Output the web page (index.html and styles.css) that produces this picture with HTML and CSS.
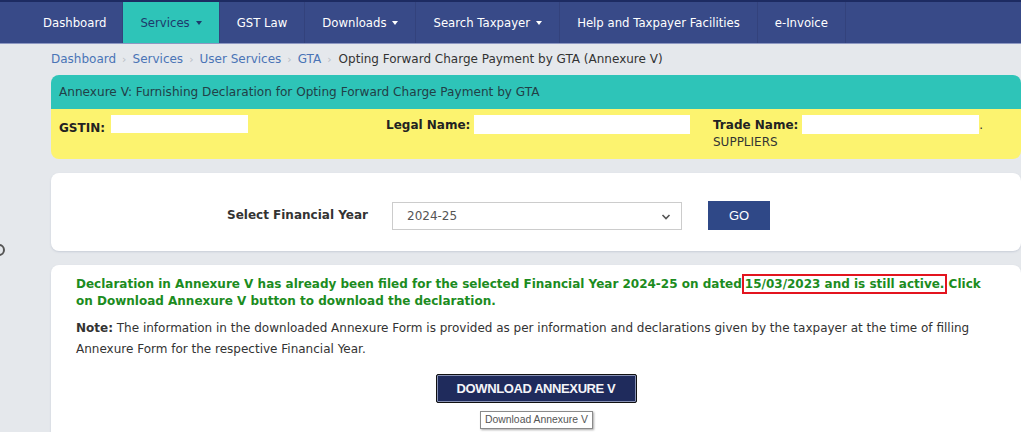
FILE: index.html
```html
<!DOCTYPE html>
<html>
<head>
<meta charset="utf-8">
<link rel="stylesheet" href="styles.css">
</head>
<body>
<nav class="topnav">
  <ul class="menu">
    <li class="item">Dashboard</li>
    <li class="item active">Services <span class="caret"></span></li>
    <li class="item">GST Law</li>
    <li class="item">Downloads <span class="caret"></span></li>
    <li class="item">Search Taxpayer <span class="caret"></span></li>
    <li class="item">Help and Taxpayer Facilities</li>
    <li class="item">e-Invoice</li>
  </ul>
</nav>
<main class="page">
  <span class="edge-ring"></span>
  <div class="crumbs">
    <a>Dashboard</a><span class="sep">›</span>
    <a>Services</a><span class="sep">›</span>
    <a>User Services</a><span class="sep">›</span>
    <a>GTA</a><span class="sep">›</span>
    <span class="current">Opting Forward Charge Payment by GTA (Annexure V)</span>
  </div>
  <section class="panel">
    <div class="panel-title">Annexure V: Furnishing Declaration for Opting Forward Charge Payment by GTA</div>
    <div class="panel-info">
      <div class="col"><b>GSTIN:</b> <span class="mask mask-gstin"></span></div>
      <div class="col"><b>Legal Name:</b> <span class="mask mask-legal"></span></div>
      <div class="col"><b>Trade Name:</b> <span class="mask mask-trade"></span>. SUPPLIERS</div>
    </div>
  </section>
  <section class="card card-select">
    <label class="fy-label">Select Financial Year</label>
    <div class="select">
      <span>2024-25</span>
      <svg class="chev" width="10" height="6" viewBox="0 0 10 6"><path d="M1.5 1 L5 4.5 L8.5 1" fill="none" stroke="#555" stroke-width="1.6"/></svg>
    </div>
    <button class="go">GO</button>
  </section>
  <section class="card card-result">
    <p class="filed">Declaration in Annexure V has already been filed for the selected Financial Year 2024-25 on dated<span class="hl">15/03/2023 and is still active.</span> Click on Download Annexure V button to download the declaration.</p>
    <p class="note"><b>Note:</b> The information in the downloaded Annexure Form is provided as per information and declarations given by the taxpayer at the time of filling Annexure Form for the respective Financial Year.</p>
    <div class="dl-row">
      <button class="dl">DOWNLOAD ANNEXURE V</button>
      <span class="tooltip">Download Annexure V</span>
    </div>
  </section>
</main>
</body>
</html>
```
FILE: styles.css
```css
* { box-sizing: border-box; }
html, body { margin: 0; padding: 0; }
body {
  width: 1021px;
  height: 432px;
  overflow: hidden;
  background: #e5e8ec;
  font-family: "DejaVu Sans", Verdana, sans-serif;
  font-size: 12px;
  color: #333;
}
.topnav {
  height: 44px;
  background: #384a88;
  border-top: 2px solid #1d2b62;
  border-bottom: 1px solid #8d98c2;
}
.menu {
  list-style: none;
  margin: 0;
  padding: 0 0 0 25px;
  display: flex;
  height: 41px;
}
.item {
  color: #fff;
  padding: 0 17px 0 17px;
  display: flex;
  align-items: center;
  gap: 6px;
  border-right: 1px solid #33427c;
  font-size: 11.7px;
}
.item:first-child { padding-left: 18px; padding-right: 16px; }
.item.active {
  background: #2ec4b8;
  color: #1d3a6c;
}
.caret {
  width: 0; height: 0;
  border-left: 3.5px solid transparent;
  border-right: 3.5px solid transparent;
  border-top: 4px solid currentColor;
  margin-top: 1px;
}
.page {
  position: relative;
  padding: 0 0 0 51px;
}
.edge-ring {
  position: absolute;
  left: -7px;
  top: 200px;
  width: 12px;
  height: 12px;
  border: 2px solid #555;
  border-radius: 50%;
}
.crumbs {
  height: 30px;
  display: flex;
  align-items: center;
  font-size: 12px;
  white-space: nowrap;
}
.crumbs a { color: #4a74b6; }
.crumbs .sep { color: #b9bec6; margin: 0 6px 0 6px; font-size: 11px; }
.crumbs .current { color: #333; margin-left: 1px; }
.panel {
  margin-top: 1px;
  border-radius: 8px;
  overflow: hidden;
}
.panel-title {
  background: #2ec4b8;
  color: #214047;
  height: 34px;
  padding: 0 8px;
  display: flex;
  align-items: center;
  font-size: 12.1px;
}
.panel-info {
  background: #fcf36f;
  height: 50px;
  padding: 6px 0 0 8px;
  display: grid;
  grid-template-columns: 327px 327px 281px;
  line-height: 17px;
}
.panel-info b { color: #222; }
.mask {
  display: inline-block;
  background: #fff;
  height: 19px;
  vertical-align: -5px;
}
.mask-gstin { width: 137px; margin-left: 2px; vertical-align: -1px; height: 18px; }
.mask-legal { width: 216px; margin-left: 0; vertical-align: -5px; }
.mask-trade { width: 177px; margin-left: 0; vertical-align: -5px; }
.card {
  background: #fff;
  border-radius: 8px;
  box-shadow: 0 1px 2px rgba(120,130,160,0.25);
}
.card-select {
  margin-top: 14px;
  height: 78px;
  display: flex;
  align-items: center;
  padding: 8px 0 0 176px;
}
.fy-label {
  font-weight: bold;
  font-size: 12px;
  color: #333;
  width: 165px;
  margin-top: -2px;
}
.select {
  width: 290px;
  height: 28px;
  border: 1px solid #ccc;
  display: flex;
  align-items: center;
  justify-content: space-between;
  padding: 0 10px 0 14px;
  color: #555;
  font-size: 12px;
}
.chev { margin-top: 1px; }
.go {
  margin-left: 26px;
  margin-top: -2px;
  width: 62px;
  height: 29px;
  border: 0;
  background: #2f4887;
  color: #fff;
  font-family: "Liberation Sans", Arial, sans-serif;
  font-size: 13px;
}
.card-result {
  margin-top: 14px;
  height: 200px;
  padding: 11px 25px 0 25px;
}
.filed {
  margin: 0;
  color: #1c8c1e;
  font-weight: bold;
  font-size: 12px;
  line-height: 17px;
}
.hl {
  outline: 2px solid #e3141f;
  outline-offset: 1px;
  margin-left: 3px;
}
.note {
  margin: 8px 0 0;
  line-height: 21px;
  font-size: 12px;
  color: #333;
}
.note b { color: #333; }
.dl-row {
  position: relative;
  display: flex;
  justify-content: center;
  margin-top: 14px;
}
.dl {
  width: 201px;
  height: 29px;
  background: #1f2b5c;
  color: #f4f4f8;
  border: 1px solid #111;
  box-shadow: inset 0 0 0 1px #8892b5;
  font-family: "Liberation Sans", Arial, sans-serif;
  font-size: 13px;
  font-weight: bold;
  letter-spacing: -0.4px;
  border-radius: 2px;
}
.tooltip {
  position: absolute;
  left: 404px;
  top: 37px;
  height: 18px;
  padding: 0 4px;
  background: #fff;
  border: 1px solid #8a8a8a;
  box-shadow: 1px 1px 2px rgba(0,0,0,0.35);
  font-family: "Liberation Sans", Arial, sans-serif;
  font-size: 10.4px;
  color: #555;
  line-height: 16px;
}
```
